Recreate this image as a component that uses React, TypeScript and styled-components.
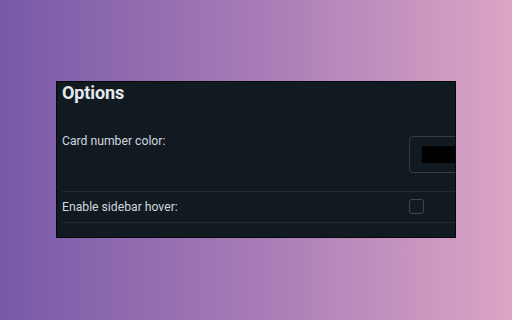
import React from "react";
import styled, { createGlobalStyle } from "styled-components";

const Global = createGlobalStyle`
  html, body { margin: 0; padding: 0; }
  body {
    width: 512px;
    height: 320px;
    overflow: hidden;
    font-family: Roboto, "Liberation Sans", sans-serif;
  }
`;

const Stage = styled.div`
  width: 512px;
  height: 320px;
  background: linear-gradient(90deg, #7859a8 0%, #a77bb6 50%, #dca5c6 100%);
  display: flex;
  align-items: flex-start;
  justify-content: flex-start;
  padding: 81px 0 0 56px;
  box-sizing: border-box;
`;

const Panel = styled.div`
  width: 400px;
  height: 157px;
  box-sizing: border-box;
  background: #121a21;
  border: 1px solid #06090c;
  overflow: hidden;
  padding: 0 0 0 5px;
`;

const Title = styled.h1`
  margin: 0;
  font-size: 18px;
  line-height: 22px;
  font-weight: 700;
  color: #e3e9ef;
  letter-spacing: -0.1px;
`;

const Table = styled.div`
  margin-top: 27px;
  width: 460px;
`;

const Row = styled.div<{ $h: number; $center?: boolean; $border?: boolean }>`
  display: grid;
  grid-template-columns: 347px 1fr;
  height: ${(p) => p.$h}px;
  align-items: ${(p) => (p.$center ? "center" : "start")};
  border-bottom: ${(p) => (p.$border ? "1px solid #222c35" : "none")};
  box-sizing: border-box;
`;

const Label = styled.div<{ $top?: number }>`
  font-size: 12.2px;
  line-height: 15px;
  color: #cfd6de;
  padding-top: ${(p) => p.$top ?? 0}px;
`;

const ColorBox = styled.div`
  margin-top: 5px;
  width: 80px;
  height: 37px;
  box-sizing: border-box;
  border: 1px solid #2f3b46;
  border-radius: 4px;
  padding: 9px 12px;
`;

const Swatch = styled.div`
  width: 100%;
  height: 17px;
  background: #000;
`;

const Check = styled.div`
  width: 15px;
  height: 15px;
  box-sizing: border-box;
  border: 1.5px solid #3a4853;
  border-radius: 3px;
  margin-top: -1px;
`;

export default function App() {
  return (
    <>
      <Global />
      <Stage>
        <Panel>
          <Title>Options</Title>
          <Table>
            <Row $h={61} $border>
              <Label $top={3}>Card number color:</Label>
              <ColorBox>
                <Swatch />
              </ColorBox>
            </Row>
            <Row $h={31} $center $border>
              <Label>Enable sidebar hover:</Label>
              <Check />
            </Row>
          </Table>
        </Panel>
      </Stage>
    </>
  );
}
